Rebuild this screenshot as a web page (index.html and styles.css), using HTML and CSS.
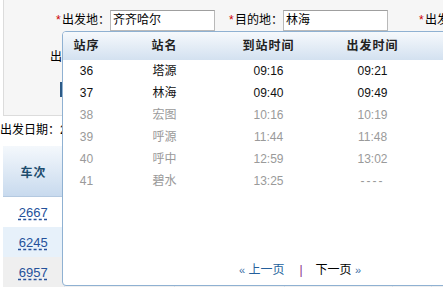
FILE: index.html
```html
<!DOCTYPE html>
<html lang="zh-CN">
<head>
<meta charset="utf-8">
<title>车次查询</title>
<link rel="stylesheet" href="styles.css">
</head>
<body>
<div class="page">
  <div class="search-panel">
    <div class="search-row row-main">
      <label class="field-label"><span class="req">*</span>出发地：</label>
      <span class="text-input">齐齐哈尔</span>
      <label class="field-label label-mid"><span class="req">*</span>目的地：</label>
      <span class="text-input">林海</span>
      <label class="field-label label-end"><span class="req">*</span>出发日期：</label>
    </div>
    <div class="search-row row-second">
      <label class="field-label">出发时间：</label>
    </div>
    <div class="search-row row-third">
      <span class="btn">查询</span>
    </div>
  </div>
  <div class="date-line">出发日期：2012-08-17</div>
  <table class="train-table">
    <thead>
      <tr><th class="c1">车次</th><th class="c2">发站</th><th class="c3">到站</th><th class="c4">出发时间</th><th class="c5">历时</th><th class="c6">票价</th></tr>
    </thead>
    <tbody>
      <tr class="r1"><td class="c1"><a class="train-no">2667</a></td><td></td><td></td><td></td><td></td><td></td></tr>
      <tr class="r2"><td class="c1"><a class="train-no">6245</a></td><td></td><td></td><td></td><td></td><td></td></tr>
      <tr class="r3"><td class="c1"><a class="train-no">6957</a></td><td></td><td></td><td></td><td></td><td></td></tr>
    </tbody>
  </table>
</div>

<div class="stations-popup">
  <div class="pop-head pop-grid">
    <span>站序</span><span>站名</span><span>到站时间</span><span>出发时间</span>
  </div>
  <div class="pop-row pop-grid"><span>36</span><span>塔源</span><span>09:16</span><span>09:21</span></div>
  <div class="pop-row pop-grid"><span>37</span><span>林海</span><span>09:40</span><span>09:49</span></div>
  <div class="pop-row pop-grid muted"><span>38</span><span>宏图</span><span>10:16</span><span>10:19</span></div>
  <div class="pop-row pop-grid muted"><span>39</span><span>呼源</span><span>11:44</span><span>11:48</span></div>
  <div class="pop-row pop-grid muted"><span>40</span><span>呼中</span><span>12:59</span><span>13:02</span></div>
  <div class="pop-row pop-grid muted"><span>41</span><span>碧水</span><span>13:25</span><span class="dash">----</span></div>
  <div class="pager">
    <a class="pg-prev"><span class="arrow">«</span> 上一页</a>
    <span class="pg-sep">|</span>
    <a class="pg-next">下一页 <span class="arrow">»</span></a>
  </div>
</div>
</body>
</html>
```

FILE: styles.css
```css
html, body {
  margin: 0;
  padding: 0;
  width: 443px;
  height: 288px;
  overflow: hidden;
  background: #fff;
}
body {
  position: relative;
  font-family: "Liberation Sans", "Noto Sans CJK SC", sans-serif;
  font-size: 12px;
  color: #000;
}

.search-panel {
  margin-left: 3px;
  width: 460px;
  height: 116px;
  box-sizing: border-box;
  background: #f6f6f6;
  border: 1px solid #dcdcdc;
  border-top: 0;
  padding-top: 10px;
  overflow: hidden;
}
.search-row {
  display: flex;
  align-items: center;
  white-space: nowrap;
}
.search-row > * { flex-shrink: 0; }
.row-main { height: 21px; padding-left: 52px; }
.row-second { height: 22px; margin-top: 15px; padding-left: 46px; }
.row-third { height: 15px; margin-top: 14px; padding-left: 56px; }

.field-label {
  display: flex;
  align-items: center;
  line-height: 21px;
}
.req {
  display: inline-block;
  width: 6px;
  color: #cc0000;
}
.label-mid { margin-left: 14px; }
.label-end { margin-left: 31px; }

.text-input {
  width: 105px;
  height: 21px;
  box-sizing: border-box;
  border: 1px solid #b9b9b9;
  border-top-color: #9f9f9f;
  background: #fff;
  padding-left: 2px;
  line-height: 19px;
}

.btn {
  display: inline-block;
  width: 60px;
  height: 15px;
  background: #2c5a86;
  color: #fff;
  font-size: 11px;
  line-height: 15px;
  text-align: center;
}

.date-line {
  margin-top: 4px;
  line-height: 20px;
  white-space: nowrap;
}

.train-table {
  margin-top: 6px;
  margin-left: 3px;
  width: 460px;
  border-collapse: collapse;
  table-layout: fixed;
}
.train-table th {
  height: 50px;
  padding: 0;
  background: linear-gradient(#f4f8fc, #c8daee);
  border-bottom: 1px solid #b4c9e0;
  color: #1d4d6e;
  font-weight: bold;
  letter-spacing: 1px;
  text-align: center;
}
.train-table td {
  height: 30px;
  padding: 0;
  text-align: center;
  border-right: 1px solid #dde3ea;
}
.train-table .c1 { width: 61px; }
.train-table .c2 { width: 110px; }
.train-table .c3 { width: 110px; }
.train-table .c4 { width: 108px; }
.train-table .c5 { width: 39px; }
.r2 td { background: #e7f1fa; }
.r3 td { background: #efefef; }
.train-no {
  font-size: 13px;
  color: #24519b;
  text-decoration: underline dashed #24519b;
  text-underline-offset: 2px;
}

.stations-popup {
  position: absolute;
  left: 62px;
  top: 31px;
  width: 420px;
  height: 255px;
  box-sizing: border-box;
  border: 1px solid #8fb1d2;
  border-radius: 4px;
  background: #fff;
  display: flex;
  flex-direction: column;
  overflow: hidden;
}
.pop-grid {
  display: grid;
  grid-template-columns: 47px 109px 99px 109px;
  text-align: center;
  white-space: nowrap;
}
.pop-head {
  height: 28px;
  line-height: 28px;
  background: linear-gradient(#f6f9fc, #d3e1f0);
  font-weight: bold;
  letter-spacing: 1px;
  color: #222;
}
.pop-row {
  height: 22px;
  line-height: 22px;
  color: #111;
}
.pop-row.muted { color: #9a9a9a; }
.dash { letter-spacing: 2px; }

.pager {
  margin-top: auto;
  padding: 0 0 7px 176px;
  line-height: 16px;
  display: flex;
  align-items: center;
  white-space: nowrap;
}
.pg-prev { color: #245f9c; }
.pg-next { color: #000; }
.pg-next .arrow, .pg-prev .arrow { color: #3a6ea5; font-size: 11px; }
.pg-sep { color: #8a2a8a; margin: 0 13px 0 15px; }
```
